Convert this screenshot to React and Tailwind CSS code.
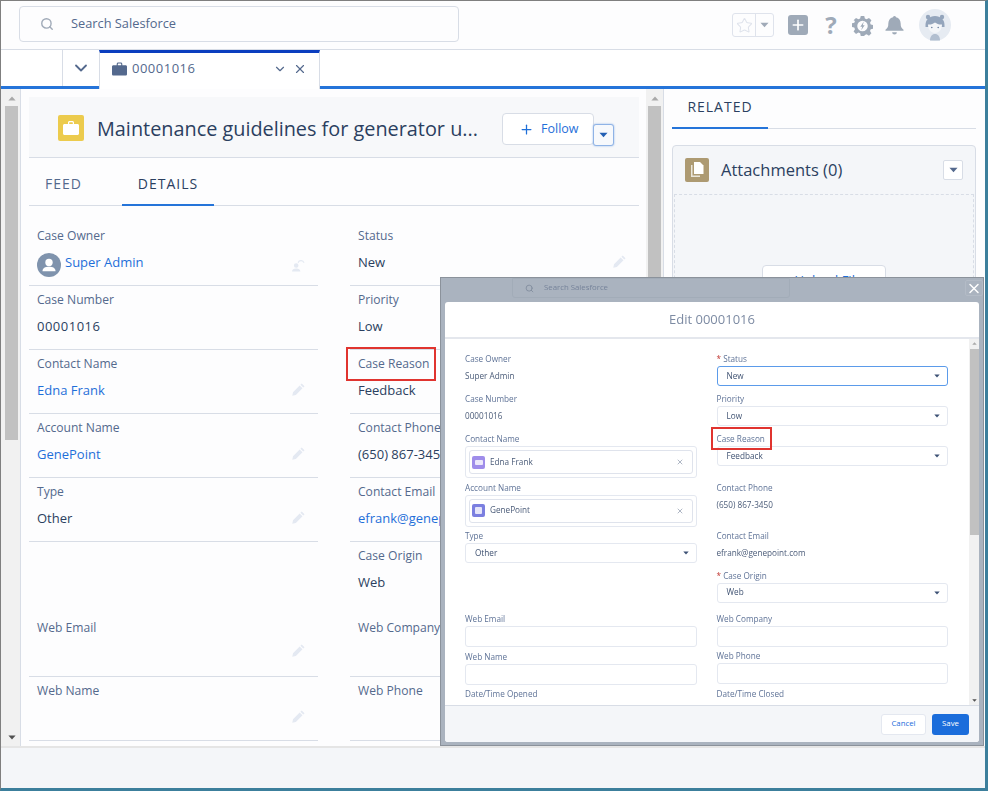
import React from "react";
import { Search, ChevronDown, X, Plus, Star, ArrowUp } from "lucide-react";

const font = "font-['Open_Sans','Noto_Sans',sans-serif]";

function Caret({ className = "" }) {
  return (
    <svg viewBox="0 0 10 6" className={className} fill="currentColor">
      <path d="M0.5 0.5h9L5 5.5z" />
    </svg>
  );
}

function Briefcase({ className = "" }) {
  return (
    <svg viewBox="0 0 16 14" className={className} fill="currentColor">
      <path d="M5 3V1.6C5 .7 5.7 0 6.6 0h2.8C10.300 0 11 .7 11 1.600V3h3.500C15.300 3 16 3.700 16 4.500V12.500C16 13.300 15.300 14 14.500 14H1.500C.7 14 0 13.300 0 12.500V4.500C0 3.700 .7 3 1.500 3zM6.200 3h3.600V1.700a.5.5 0 0 0-.5-.5H6.700a.5.5 0 0 0-.5.5z" />
    </svg>
  );
}

function Gear({ className = "" }) {
  return (
    <svg viewBox="0 0 24 24" className={className} fill="currentColor">
      <path fillRule="evenodd" d="M10 1h4l.7 3.100 2 .8L19.400 3.300l2.800 2.800-1.600 2.700.8 2 3 .7v4l-3 .7-.8 2 1.600 2.700-2.800 2.800-2.700-1.600-2 .8L14 24h-4l-.7-3.100-2-.8-2.700 1.600-2.800-2.800 1.600-2.700-.8-2-3-.7v-4l3-.7.8-2L1.800 6.100l2.800-2.800 2.700 1.600 2-.8zM12 6.500a6 6 0 1 0 0 12 6 6 0 0 0 0-12z" />
      <path d="M13.500 7.500l-4 5.800h2.200L10.500 17.500l4-5.800h-2.200z" />
    </svg>
  );
}

function Bell({ className = "" }) {
  return (
    <svg viewBox="0 0 20 20" className={className} fill="currentColor">
      <path d="M10 0a2 2 0 0 1 1.600 1.200C14.800 1.900 16.500 4.500 16.500 8c0 3.500.8 5 3 6.500v1H.5v-1c2.200-1.500 3-3 3-6.500 0-3.500 1.700-6.100 4.900-6.800A2 2 0 0 1 10 0zM7.500 17h5a2.500 2.500 0 0 1-5 0z" />
    </svg>
  );
}

function Avatar() {
  return (
    <svg viewBox="0 0 32 32" className="w-8 h-8 block">
      <circle cx="16" cy="16" r="16" fill="#e6ebf2" />
      <circle cx="9" cy="8" r="2.200" fill="#94a5bc" />
      <circle cx="23" cy="8" r="2.200" fill="#94a5bc" />
      <path d="M6.500 16c0-5.500 4-9 9.500-9s9.500 3.500 9.500 9v2h-19z" fill="#94a5bc" />
      <path d="M9 15.500c2.500 .4 5-.5 7-2 2 1.500 4.500 2.400 7 2 0 4.500-2.700 8.500-7 8.500s-7-4-7-8.500z" fill="#f4f6f9" />
      <path d="M11 31.500c0-4 2-6.500 5-6.500s5 2.500 5 6.500z" fill="#b2bfd0" />
      <circle cx="12.800" cy="18.500" r=".8" fill="#6e82a0" />
      <circle cx="19.200" cy="18.500" r=".8" fill="#6e82a0" />
    </svg>
  );
}

function PencilMark() {
  return (
    <svg viewBox="0 0 14 14" className="w-[13px] h-[13px]" fill="#e4e9f2">
      <path d="M10.500.5l3 3-1.400 1.400-3-3zM8.300 2.700l3 3-7.200 7.200-3.800.9.800-3.900z" />
    </svg>
  );
}

function LockMark() {
  return (
    <svg viewBox="0 0 14 14" className="w-[13px] h-[13px]" fill="#e4e9f2">
      <path d="M4.500 4.500a2.500 2.500 0 1 1 0 5 2.500 2.500 0 0 1 0-5zM0 13.500c0-2 1.800-3.300 4.500-3.300S9 11.500 9 13.500z" />
      <path d="M6 3.500A4 4 0 0 1 13.500 4h-1.400A2.700 2.700 0 0 0 7 4.500z" />
    </svg>
  );
}

function UserDisc() {
  return (
    <svg viewBox="0 0 24 24" className="w-6 h-6 shrink-0">
      <circle cx="12" cy="12" r="12" fill="#7f93ad" />
      <circle cx="12" cy="9.500" r="3.700" fill="#fff" />
      <path d="M5.500 18.200c0-3 2.500-4.400 6.500-4.400s6.500 1.400 6.500 4.400z" fill="#fff" />
    </svg>
  );
}

function Field({ label, value, link, icon, h = "h-16", pad = "pt-[5px]", avatar, noIcon, num, noLine, high }) {
  return (
    <div className={`relative ${h} ${noLine ? "" : "border-b border-[#d8dde6]"} px-2 ${pad}`}>
      <div className="text-[12.1px] leading-[18px] text-[#54698d] whitespace-nowrap">{label}</div>
      {value ? (
        <div className={`mt-[7px] flex items-center gap-1 text-[13px] leading-[20px] whitespace-nowrap ${num ? "tracking-[0.5px]" : ""} ${link ? "text-[#1f6fd9]" : "text-[#2b3f60]"}`}>
          {avatar ? <span className="-my-1 relative top-[3px]"><UserDisc /></span> : null}
          {value}
        </div>
      ) : null}
      {noIcon ? null : (
        <span className={`absolute right-[13px] ${icon === "lock" ? "bottom-[13px]" : high ? "bottom-[19px]" : "bottom-[17px]"}`}>
          {icon === "lock" ? <LockMark /> : <PencilMark />}
        </span>
      )}
    </div>
  );
}

function MLabel({ children, req }) {
  return (
    <div className="text-[8.2px] leading-[12px] text-[#5f7397] whitespace-nowrap">
      {req ? <span className="text-[#c23934]">* </span> : null}
      {children}
    </div>
  );
}

function MText({ label, value }) {
  return (
    <div className="h-[40px]">
      <MLabel>{label}</MLabel>
      <div className="mt-[5px] text-[8.2px] leading-[12px] text-[#4a5b78]">{value}</div>
    </div>
  );
}

function MSelect({ label, value, req, focus, h = "h-[40px]" }) {
  return (
    <div className={h}>
      <MLabel req={req}>{label}</MLabel>
      <div className={`mt-[1px] h-[20px] rounded-[3px] bg-white flex items-center justify-between pl-[9px] pr-[7px] text-[8.2px] text-[#3f5272] border ${focus ? "border-[#5b9bea]" : "border-[#e4e8f0]"}`}>
        <span>{value}</span>
        <Caret className="w-[6px] h-[4px] text-[#3c5074]" />
      </div>
    </div>
  );
}

function MLookup({ label, value, color, icon }) {
  return (
    <div className="h-[48.500px]">
      <MLabel>{label}</MLabel>
      <div className="mt-[1px] h-[32px] border border-[#e4e8f0] rounded-[3px] p-[3px] bg-white">
        <div className="h-full border border-[#dfe3ec] rounded-[3px] flex items-center pl-[2px] pr-[8px]">
          <span className={`w-[13px] h-[13px] rounded-[2px] ${color} flex items-center justify-center`}>{icon}</span>
          <span className="ml-[5px] text-[8.2px] text-[#4a5b78] flex-1">{value}</span>
          <X className="w-[8px] h-[8px] text-[#8693a8]" />
        </div>
      </div>
    </div>
  );
}

function MInput({ label, h = "h-[37.500px]" }) {
  return (
    <div className={h}>
      <MLabel>{label}</MLabel>
      <div className="mt-[1px] h-[21px] rounded-[3px] bg-white border border-[#e4e8f0]" />
    </div>
  );
}

function Modal() {
  return (
    <div className="absolute left-[439px] top-[276px] w-[544px] h-[469px] bg-[#aab3bf] border border-[#8b929b] overflow-hidden">
      <div className="absolute left-[71px] top-0 w-[278px] h-[20px] border border-[#a2acb8] rounded-b-[3px] flex items-center pl-[12px] blur-[0.3px]">
        <Search className="w-[9px] h-[9px] text-[#7b8798]" />
        <span className="ml-[10px] text-[7.8px] text-[#76839a]">Search Salesforce</span>
      </div>
      <span className="absolute right-[0px] top-[2px] w-[18px] h-[16px] border border-[#b3bbc6] rounded-[2px] flex items-center justify-center">
        <X className="w-[17px] h-[17px] text-white" strokeWidth={2.2} />
      </span>
      <div className="absolute left-[4px] top-[24px] w-[534px] bottom-[3px] bg-white rounded-[3px] flex flex-col overflow-hidden blur-[0.3px]">
        <div className="h-[37px] shrink-0 border-b-2 border-[#e4e7ed] flex items-center justify-center pt-[1px] text-[13px] text-[#7d8ba3]">
          Edit 00001016
        </div>
        <div className="flex-1 flex overflow-hidden">
          <div className="flex-1 pl-[20px] pr-[21px] pt-[14px] grid grid-cols-2 gap-x-[20px] overflow-hidden">
            <div>
              <MText label="Case Owner" value="Super Admin" />
              <MText label="Case Number" value="00001016" />
              <MLookup
                label="Contact Name"
                value="Edna Frank"
                color="bg-[#9f8dea]"
                icon={<span className="w-[8px] h-[5px] bg-white/80 rounded-[1px]" />}
              />
              <MLookup
                label="Account Name"
                value="GenePoint"
                color="bg-[#7b7fe0]"
                icon={<span className="w-[7px] h-[7px] bg-white/80 rounded-[1px]" />}
              />
              <MSelect label="Type" value="Other" h="h-[83px]" />
              <MInput label="Web Email" />
              <MInput label="Web Name" />
              <MLabel>Date/Time Opened</MLabel>
            </div>
            <div>
              <MSelect label="Status" value="New" req focus />
              <MSelect label="Priority" value="Low" />
              <MSelect label="Case Reason" value="Feedback" h="h-[48.500px]" />
              <MText label="Contact Phone" value="(650) 867-3450" />
              <div className="h-[8px]" />
              <MText label="Contact Email" value="efrank@genepoint.com" />
              <MSelect label="Case Origin" value="Web" req h="h-[43px]" />
              <MInput label="Web Company" />
              <MInput label="Web Phone" />
              <MLabel>Date/Time Closed</MLabel>
            </div>
          </div>
          <div className="w-[10px] shrink-0 bg-[#f1f1f1] flex flex-col items-center justify-between py-[3px]">
            <div className="w-full flex-1 flex flex-col items-center">
              <Caret className="w-[5px] h-[3px] text-[#a9a9a9] rotate-180" />
              <div className="mt-[4px] w-[9px] h-[186px] bg-[#c1c1c1]" />
            </div>
            <Caret className="w-[5px] h-[3px] text-[#505050]" />
          </div>
        </div>
        <div className="h-[37px] shrink-0 border-t border-[#d8dde6] bg-[#f4f6f9] flex items-center justify-end gap-[6px] pr-[10px]">
          <span className="w-[45px] h-[21px] rounded-[3px] bg-white border border-[#e4e8f0] flex items-center justify-center text-[7.8px] text-[#1b6ddb]">Cancel</span>
          <span className="w-[37px] h-[21px] rounded-[3px] bg-[#1b6ddb] flex items-center justify-center text-[7.8px] text-white">Save</span>
        </div>
      </div>
      <span className="absolute left-[270px] top-[149px] w-[61px] h-[23px] border-2 border-[#e0342f]" />
    </div>
  );
}

export default function App() {
  return (
    <div className={`${font} relative w-[988px] h-[791px] overflow-hidden bg-white border-t border-l border-[#7f7f7f] border-r-[3px] border-r-[#3c7f9c] border-b-[3px] border-b-[#3c7f9c]`}>
      <div className="flex flex-col h-full">
        {/* global header */}
        <header className="h-[49px] shrink-0 border-b border-[#d8dde6] bg-[#fdfdfe] flex items-center pl-[18px] pr-[34px]">
          <div className="w-[440px] h-[36px] rounded-[4px] border border-[#d8dde6] flex items-center pl-[20px] -mt-[2px]">
            <Search className="w-[14px] h-[14px] text-[#a0aab8]" strokeWidth={2.4} />
            <span className="ml-[17px] text-[12.8px] text-[#54698d]">Search Salesforce</span>
          </div>
          <div className="ml-auto flex items-center">
            <div className="w-[42px] h-[24px] rounded-[3px] border border-[#dfe3ec] flex items-center">
              <span className="w-[23px] flex justify-center border-r border-[#dfe3ec] h-full items-center">
                <Star className="w-[17px] h-[17px] text-[#dfe3ec]" strokeWidth={1.5} />
              </span>
              <span className="flex-1 flex justify-center">
                <Caret className="w-[9px] h-[6px] text-[#a0aab8]" />
              </span>
            </div>
            <span className="ml-[14px] w-5 h-5 rounded-[3px] bg-[#9faab8] flex items-center justify-center">
              <Plus className="w-4 h-4 text-white" strokeWidth={2.500} />
            </span>
            <span className="ml-[12px] w-[22px] text-center text-[24px] leading-[24px] font-bold text-[#9faab8]">?</span>
            <Gear className="ml-[10px] w-[21px] h-[21px] text-[#9faab8]" />
            <Bell className="ml-[12px] w-[19px] h-[19px] text-[#9faab8]" />
            <span className="ml-[15px]"><Avatar /></span>
          </div>
        </header>

        {/* tab bar */}
        <div className="h-[39px] shrink-0 relative flex pl-[61px] border-b-[3px] border-[#2574d9] bg-white">
          <div className="w-[37px] border-l border-[#d8dde6] flex items-center justify-center">
            <ChevronDown className="w-[20px] h-[20px] text-[#54698d]" strokeWidth={2.2} />
          </div>
          <div className="relative w-[221px] h-[39px] bg-white border-t-[3px] border-t-[#0b3ebf] border-r border-r-[#d8dde6] border-l border-l-[#d8dde6] flex items-center pl-[12px] pr-[12px] pb-[5px]">
            <Briefcase className="w-[15px] h-[14px] text-[#54698d]" />
            <span className="ml-[5px] text-[13px] tracking-[0.5px] text-[#54698d]">00001016</span>
            <ChevronDown className="ml-auto w-[14px] h-[14px] text-[#54698d]" />
            <X className="ml-[6px] w-[14px] h-[14px] text-[#54698d]" />
          </div>
        </div>

        {/* body */}
        <div className="flex-1 flex overflow-hidden bg-[#fdfdfe]">
          {/* left scrollbar */}
          <div className="w-[20px] shrink-0 bg-[#f1f1f1] border-r border-[#d8dde6] flex flex-col items-center pt-[7px] pl-[2px] relative">
            <Caret className="w-[8px] h-[5px] text-[#a9a9a9] rotate-180" />
            <div className="mt-[5px] w-[13px] h-[334px] bg-[#c1c1c1]" />
            <Caret className="absolute bottom-[6px] left-[7px] w-[8px] h-[5px] text-[#505050]" />
          </div>

          {/* main column */}
          <div className="w-[625px] shrink-0 pl-[8px] pr-[7px] pt-[8px] overflow-hidden">
            <div className="h-[61px] bg-[#f7f8fa] border-b border-[#d8dde6] flex items-center pl-[29px] relative">
              <span className="w-[26px] h-[26px] rounded-[2px] bg-[#eccb4d] flex items-center justify-center mt-[1px]">
                <Briefcase className="w-[16px] h-[14px] text-white" />
              </span>
              <span className="ml-[13px] text-[19.85px] leading-[26px] text-[#2b3f60] whitespace-nowrap mt-[3px]">Maintenance guidelines for generator u...</span>
              <span className="absolute left-[473px] top-[16px] w-[92px] h-[32px] rounded-[4px] bg-white border border-[#d8dde6] flex items-center pl-[16px] text-[12.5px] text-[#1f6fd9]">
                <Plus className="w-[15px] h-[15px] mr-[7px]" />
                Follow
              </span>
              <span className="absolute left-[564px] top-[27px] w-[21px] h-[22px] rounded-[3px] bg-[#f7f9fc] border border-[#8fb3e6] shadow-[0_0_2px_#8fb3e6] flex items-center justify-center">
                <Caret className="w-[9px] h-[6px] text-[#2460b4]" />
              </span>
            </div>
            <div className="h-[48px] border-b border-[#d8dde6] flex text-[14px] tracking-[1px]">
              <span className="w-[93px] pl-[16px] pt-[4px] h-full flex items-center text-[#54698d]">FEED</span>
              <span className="w-[92px] h-[48px] pt-[4px] flex items-center justify-center text-[#2b3f60] border-b-2 border-[#2574d9]">DETAILS</span>
            </div>
            <div className="pt-[16px] grid grid-cols-2 gap-x-[32px]">
              <div>
                <Field label="Case Owner" value="Super Admin" link avatar icon="lock" />
                <Field label="Case Number" value="00001016" num noIcon />
                <Field label="Contact Name" value="Edna Frank" link />
                <Field label="Account Name" value="GenePoint" link />
                <Field label="Type" value="Other" />
                <div className="h-[71px]" />
                <Field label="Web Email" pad="pt-[6px]" high />
                <Field label="Web Name" />
              </div>
              <div>
                <Field label="Status" value="New" />
                <Field label="Priority" value="Low" noIcon />
                <div className="relative">
                  <Field label="Case Reason" value="Feedback" />
                  <span className="absolute -left-[4px] -top-[3px] w-[90px] h-[34px] border-2 border-[#e0342f]" />
                </div>
                <Field label="Contact Phone" value="(650) 867-3450" />
                <Field label="Contact Email" value="efrank@genepoint.com" link />
                <Field label="Case Origin" value="Web" h="h-[71px]" noIcon noLine />
                <Field label="Web Company" pad="pt-[6px]" high />
                <Field label="Web Phone" />
              </div>
            </div>
          </div>

          {/* inner scrollbar */}
          <div className="w-[18px] shrink-0 bg-[#f1f1f1] border-r border-[#d8dde6] flex flex-col items-center pt-[7px]">
            <Caret className="w-[8px] h-[5px] text-[#a9a9a9] rotate-180" />
            <div className="mt-[5px] w-[13px] h-[334px] bg-[#c1c1c1]" />
          </div>

          {/* related column */}
          <div className="flex-1 pl-[8px] pr-[9px] overflow-hidden">
            <div className="h-[40px] border-b border-[#d8dde6] flex">
              <span className="w-[96px] h-[40px] pb-[3px] border-b-2 border-[#2574d9] flex items-center justify-center text-[14px] tracking-[1px] text-[#2b3f60]">RELATED</span>
            </div>
            <div className="mt-[16px] rounded-[4px] border border-[#d8dde6] bg-[#f4f6f9] h-[200px]">
              <div className="h-[48px] flex items-center px-[12px]">
                <span className="w-[24px] h-[24px] rounded-[2px] bg-[#ad9a72] flex items-center justify-center">
                  <svg viewBox="0 0 14 16" className="w-[14px] h-[16px]" fill="#fff">
                    <path d="M4 0h6l3.500 3.500V12H4z" />
                    <path d="M2.500 3v10.500H10V15H1V3z" opacity=".75" />
                  </svg>
                </span>
                <span className="ml-[12px] text-[16.5px] text-[#2b3f60]">Attachments (0)</span>
                <span className="ml-auto w-[20px] h-[20px] rounded-[2px] bg-white border border-[#d8dde6] flex items-center justify-center">
                  <Caret className="w-[9px] h-[6px] text-[#54698d]" />
                </span>
              </div>
              <div className="mx-[1px] h-[120px] border-t border-l border-r border-dashed border-[#d8dde6] flex justify-center pt-[70px]">
                <span className="w-[124px] h-[32px] rounded-[4px] bg-white border border-[#d8dde6] text-[13px] text-[#1f6fd9] pt-[5px] flex justify-center gap-[3px]">
                  <ArrowUp className="w-[12px] h-[12px] mt-[4px]" />
                  Upload Files
                </span>
              </div>
            </div>
          </div>
        </div>

        {/* footer */}
        <div className="h-[42px] shrink-0 bg-[#f4f6f9] border-t-2 border-[#e5e5e5]" />
      </div>

      <Modal />
    </div>
  );
}
